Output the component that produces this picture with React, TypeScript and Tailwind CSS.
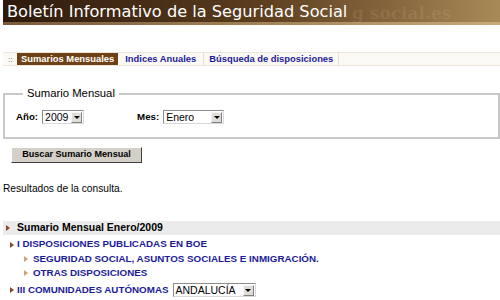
const Tri = ({ className }: { className: string }) => (
  <span className={"inline-block w-0 h-0 border-y-[3px] border-y-transparent border-l-[4px] " + className} />
);

const FakeSelect = ({ value, width }: { value: string; width: string }) => (
  <span
    className={
      "inline-flex items-center h-[14px] bg-white border border-[#8c8c8c] border-b-[#d8d8d8] border-r-[#d8d8d8] " + width
    }
  >
    <span className="flex-1 px-[2px] text-[10.5px] leading-none font-['Liberation_Sans_Narrow','Liberation_Sans',Arial,sans-serif] font-normal text-black">
      {value}
    </span>
    <span className="w-[11px] h-[11px] mr-[1px] bg-[#e0ddd8] border border-[#f4f4f4] border-r-[#808080] border-b-[#808080] flex items-center justify-center">
      <span className="w-0 h-0 border-x-[3px] border-x-transparent border-t-[3px] border-t-black" />
    </span>
  </span>
);

export default function App() {
  return (
    <div className="w-[500px] h-[300px] overflow-hidden bg-white font-['Liberation_Sans',Arial,sans-serif] text-black">
      {/* banner */}
      <div className="ml-[3px] h-[25px] relative bg-gradient-to-r from-[#2e1a0c] via-[#5a3c1e] to-[#a88a58]">
        <div className="absolute inset-x-0 bottom-0 h-[3px] bg-gradient-to-r from-[#7a5a38] to-[#c8aa78]" />
        <span className="absolute left-[349px] top-[1px] text-[17px] font-bold font-['DejaVu_Serif',serif] text-[#e8d0a0]/[0.12]">
          g social.es
        </span>
        <h1 className="relative pl-[4px] pt-[2px] text-[16.2px] leading-[20px] font-['DejaVu_Sans',Verdana,sans-serif] text-white">
          Boletín Informativo de la Seguridad Social
        </h1>
      </div>

      {/* tabs */}
      <div className="mt-[27px] ml-[3px] h-[14px] flex items-center bg-[#fbf9f4] border-y border-[#ece6da] text-[9.4px] font-bold">
        <span className="w-[14px] pl-[5px] text-[7px] leading-none text-[#999]">::</span>
        <span className="h-[12px] px-[4px] flex items-center bg-[#6e4216] text-white">Sumarios Mensuales</span>
        <span className="h-[12px] px-[7px] flex items-center text-[#1b1b99] border-r border-[#e6dfd0]">Indices Anuales</span>
        <span className="h-[12px] px-[5px] flex items-center text-[#1b1b99] border-r border-[#e6dfd0]">Búsqueda de disposiciones</span>
      </div>

      {/* fieldset */}
      <fieldset className="mt-[21px] ml-[3px] h-[52px] border-2 border-[#c8c8c8] px-[11px]">
        <legend className="ml-[7px] px-[4px] text-[11.3px] leading-[13px] font-normal">Sumario Mensual</legend>
        <div className="mt-[10px] flex items-center text-[9.7px] font-bold">
          <span>Año:</span>
          <span className="ml-[4px] flex">
            <FakeSelect value="2009" width="w-[42px]" />
          </span>
          <span className="ml-[53px]">Mes:</span>
          <span className="ml-[4px] flex">
            <FakeSelect value="Enero" width="w-[61px]" />
          </span>
        </div>
      </fieldset>

      <div className="mt-[8px] ml-[11px] flex">
        <button className="h-[16px] w-[131px] bg-[#d4d0c8] border border-white border-r-[#404040] border-b-[#404040] whitespace-nowrap text-[9.1px] font-bold leading-none text-black">
          Buscar Sumario Mensual
        </button>
      </div>

      <p className="mt-[20px] ml-[3px] h-[12px] text-[10.2px] leading-[12px]">Resultados de la consulta.</p>

      <div className="mt-[26px] ml-[3px] h-[14px] flex items-center bg-[#ebebeb] text-[10.5px] font-bold">
        <Tri className="ml-[3px] border-l-[#8a4a2a]" />
        <span className="ml-[7px]">Sumario Mensual Enero/2009</span>
      </div>

      <div className="font-bold text-[9.8px] text-[#1b1b99]">
        <div className="h-[15px] mt-[2px] flex items-center pl-[10px]">
          <Tri className="border-l-[#8a4a2a]" />
          <span className="ml-[3px]">I DISPOSICIONES PUBLICADAS EN BOE</span>
        </div>
        <div className="h-[14px] flex items-center pl-[24px]">
          <Tri className="border-l-[#d0a070]" />
          <span className="ml-[5px]">SEGURIDAD SOCIAL, ASUNTOS SOCIALES E INMIGRACIÓN.</span>
        </div>
        <div className="h-[14px] flex items-center pl-[24px]">
          <Tri className="border-l-[#d0a070]" />
          <span className="ml-[5px]">OTRAS DISPOSICIONES</span>
        </div>
        <div className="h-[16px] mt-[2px] flex items-center pl-[10px]">
          <Tri className="border-l-[#8a4a2a]" />
          <span className="ml-[3px]">III COMUNIDADES AUTÓNOMAS</span>
          <span className="ml-[4px] flex">
            <FakeSelect value="ANDALUCÍA" width="w-[83px]" />
          </span>
        </div>
      </div>
    </div>
  );
}
